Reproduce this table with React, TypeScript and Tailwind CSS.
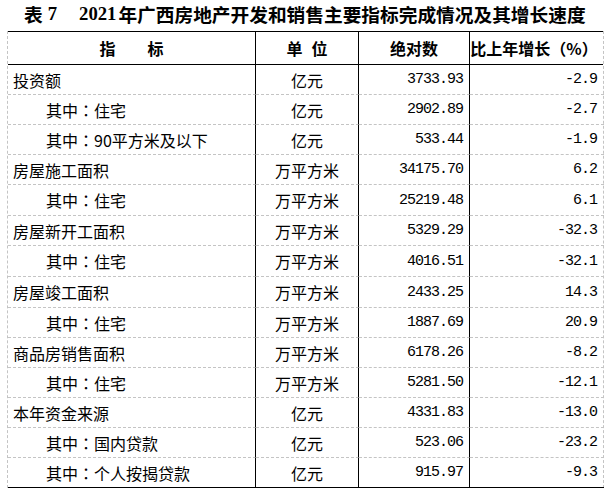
const rows = [
  { name: '投资额', sub: false, unit: '亿元', value: '3733.93', rate: '-2.9', h: 'h-[30px]' },
  { name: '住宅', sub: true, unit: '亿元', value: '2902.89', rate: '-2.7', h: 'h-[30px]' },
  { name: '90平方米及以下', sub: true, unit: '亿元', value: '533.44', rate: '-1.9', h: 'h-[30px]' },
  { name: '房屋施工面积', sub: false, unit: '万平方米', value: '34175.70', rate: '6.2', h: 'h-[30px]' },
  { name: '住宅', sub: true, unit: '万平方米', value: '25219.48', rate: '6.1', h: 'h-[31px]' },
  { name: '房屋新开工面积', sub: false, unit: '万平方米', value: '5329.29', rate: '-32.3', h: 'h-[30px]' },
  { name: '住宅', sub: true, unit: '万平方米', value: '4016.51', rate: '-32.1', h: 'h-[31px]' },
  { name: '房屋竣工面积', sub: false, unit: '万平方米', value: '2433.25', rate: '14.3', h: 'h-[31px]' },
  { name: '住宅', sub: true, unit: '万平方米', value: '1887.69', rate: '20.9', h: 'h-[30px]' },
  { name: '商品房销售面积', sub: false, unit: '万平方米', value: '6178.26', rate: '-8.2', h: 'h-[30px]' },
  { name: '住宅', sub: true, unit: '万平方米', value: '5281.50', rate: '-12.1', h: 'h-[30px]' },
  { name: '本年资金来源', sub: false, unit: '亿元', value: '4331.83', rate: '-13.0', h: 'h-[30px]' },
  { name: '国内贷款', sub: true, unit: '亿元', value: '523.06', rate: '-23.2', h: 'h-[30px]' },
  { name: '个人按揭贷款', sub: true, unit: '亿元', value: '915.97', rate: '-9.3', h: 'h-[30px]' },
];

const cjk = "font-['Noto_Sans_CJK_SC',sans-serif]";
const num = "font-['Liberation_Mono','Noto_Sans_CJK_SC',monospace] text-[15px] tracking-[-1px]";

const App = () => {
  return (
    <div className={`h-[496px] w-[609px] bg-white text-black ${cjk}`}>
      {/* Title */}
      <div className="flex h-[31px] items-start pt-[1px] pl-[24px]">
        <h1 className="flex items-center text-[18.7px] leading-[26px] font-bold">
          <span>表</span>
          <span className="ml-[5px] font-['Liberation_Serif',serif]">7</span>
          <span className="ml-[22px] font-['Liberation_Serif',serif]">2021</span>
          <span className="ml-[2px]">年广西房地产开发和销售主要指标完成情况及其增长速度</span>
        </h1>
      </div>

      {/* Table */}
      <div className="ml-[7px] w-[597px] border-x border-dashed border-[#c4c4c4]">
        {/* Header */}
        <div className="grid h-[34px] grid-cols-[248px_103px_111px_134px] border-y border-black text-[16px] leading-none font-bold">
          <div className="flex items-center justify-center border-r border-black">指　　标</div>
          <div className="flex items-center justify-center gap-[9px] border-r border-black">
            <span>单</span>
            <span>位</span>
          </div>
          <div className="flex items-center justify-center border-r border-black">绝对数</div>
          <div className="flex items-center justify-center pr-[6px]">
            比上年增长<span className="font-['Noto_Sans_CJK_TC',sans-serif]">（%）</span>
          </div>
        </div>

        {/* Body */}
        {rows.map((r, i) => {
          const last = i === rows.length - 1;
          const bottom = last
            ? 'border-b border-b-black'
            : 'border-b border-b-[#c4c4c4] [border-bottom-style:dashed]';
          return (
            <div key={i} className={`grid grid-cols-[248px_103px_111px_134px] text-[16px] leading-none ${r.h}`}>
              <div className={`flex items-center border-r border-r-black ${bottom} ${r.sub ? 'pl-[38px]' : 'pl-[5px]'}`}>
                {r.sub && (
                  <>
                    其中<span className="font-['Noto_Sans_CJK_TC',sans-serif]">：</span>
                  </>
                )}
                {r.name}
              </div>
              <div className={`flex items-center justify-center border-r border-r-black ${bottom}`}>{r.unit}</div>
              <div className={`flex items-center justify-end border-r border-r-black pr-[6px] ${bottom} ${num}`}>
                {r.value}
              </div>
              <div className={`flex items-center justify-end pr-[7px] ${bottom} ${num}`}>{r.rate}</div>
            </div>
          );
        })}
      </div>
    </div>
  );
};

export default App;
